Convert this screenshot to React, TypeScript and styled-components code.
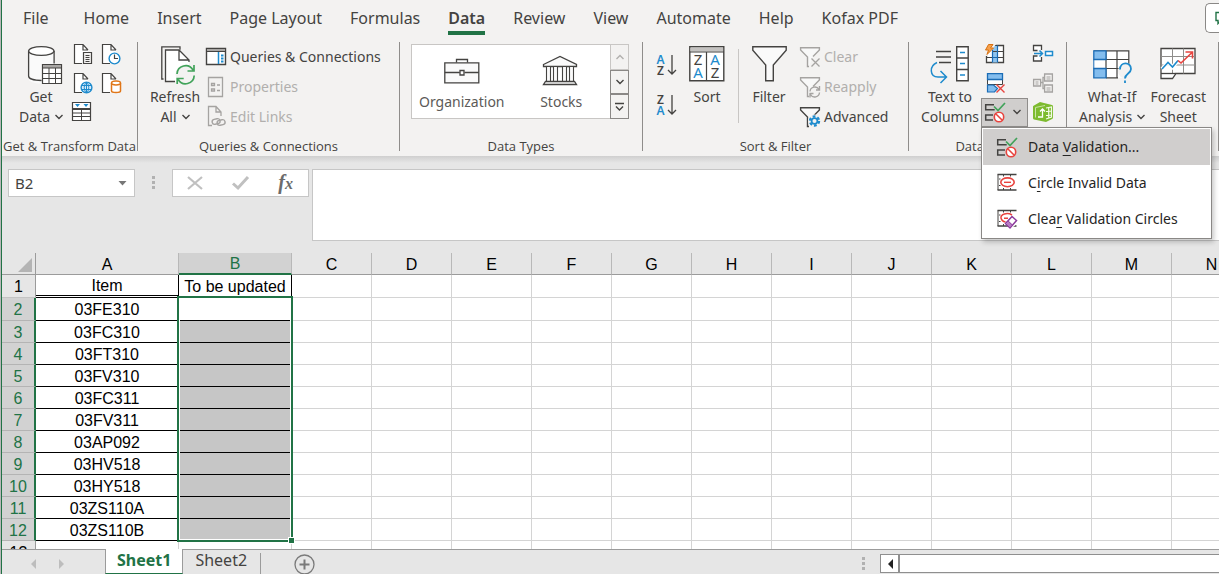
import React from 'react';
import styled, { createGlobalStyle, css } from 'styled-components';

const ink = '#444341';
const blue = '#1e8bcd';
const red = '#e8443f';
const green = '#41a35a';
const excel = '#217346';
const muted = '#a5a3a1';
const uiFont = `'Noto Sans', 'Open Sans', sans-serif`;
const cellFont = `'Liberation Sans', Arial, sans-serif`;

const GlobalStyle = createGlobalStyle`
  *, *::before, *::after { box-sizing: border-box; }
  body { margin: 0; background: #e6e6e6; }
  button, input { font: inherit; color: inherit; margin: 0; }
`;

/* ---------- window ---------- */

const Window = styled.div`
  display: flex;
  flex-direction: column;
  height: 100vh;
  overflow: hidden;
  padding-left: 1px;
  background: #b9b7b9;
  font-family: ${uiFont};
  font-size: 14px;
  color: ${ink};
`;

const Frame = styled.main`
  display: flex;
  flex-direction: column;
  flex: 1;
  min-height: 0;
  border-left: 1px solid ${excel};
  background: #e6e6e6;
`;

const PlainButton = styled.button`
  border: 0;
  padding: 0;
  background: none;
`;

/* ---------- ribbon tabs ---------- */

const TabBar = styled.nav`
  display: flex;
  align-items: flex-start;
  height: 36px;
  padding-left: 7px;
  background: #f3f2f1;
  font-size: 16px;
`;

const Tab = styled(PlainButton)<{ $active?: boolean }>`
  padding: 6px 14px 0;
  line-height: 24px;
  white-space: nowrap;
  font-weight: ${(p) => (p.$active ? 600 : 400)};

  &:first-child { padding-right: 21px; }

  &::after {
    content: '';
    display: block;
    height: 4px;
    margin-top: 1px;
    background: ${(p) => (p.$active ? excel : 'transparent')};
  }
`;

const CommentsButton = styled.button`
  display: flex;
  align-items: center;
  width: 14px;
  height: 30px;
  margin: 3px 0 0 auto;
  padding: 0 0 0 9px;
  overflow: hidden;
  border: 1px solid #8a8886;
  border-right: 0;
  border-radius: 5px 0 0 5px;
  background: #fff;
`;

/* ---------- ribbon ---------- */

const Ribbon = styled.section`
  display: flex;
  height: 120px;
  padding-top: 6px;
  background: #f3f2f1;
`;

const Group = styled.section<{ $width: number; $indent: number }>`
  display: flex;
  flex-direction: column;
  flex: none;
  width: ${(p) => p.$width}px;
  height: 112px;

  & > div { padding-left: ${(p) => p.$indent}px; }
`;

const GroupBody = styled.div`
  display: flex;
  align-items: flex-start;
  height: 96px;
`;

const Caption = styled.h2`
  margin: 0;
  font-family: 'Open Sans', 'Noto Sans', sans-serif;
  font-size: 13px;
  font-weight: 400;
  line-height: 16px;
  text-align: center;
  white-space: nowrap;
`;

const GroupRule = styled.div`
  flex: none;
  width: 1px;
  height: 109px;
  background: #8f8d8b;
`;

const InnerRule = styled.div`
  width: 1px;
  height: 74px;
  margin: 7px 2px 0 3px;
  background: #c8c6c4;
`;

const BigButton = styled(PlainButton)`
  display: flex;
  flex-direction: column;
  align-items: center;
  flex: none;
  min-width: 56px;
  padding-top: 4px;
  line-height: 20px;
  white-space: nowrap;

  & > svg { margin-bottom: 3px; }
  & + & { margin-left: 5px; }
`;

const LabelLine = styled.span`
  display: flex;
  align-items: center;
  gap: 5px;
`;

const IconGrid = styled.div<{ $columns: string; $offset?: number }>`
  display: grid;
  grid-template-columns: ${(p) => p.$columns};
  grid-auto-rows: 24px;
  row-gap: 5px;
  align-items: center;
  margin-left: ${(p) => p.$offset ?? 0}px;
`;

const IconButton = styled(PlainButton)`
  display: flex;
  align-items: center;
  justify-content: flex-start;
  padding-left: 4px;
  height: 24px;
`;

const CommandList = styled.div`
  margin-left: 3px;
`;

const Command = styled(PlainButton)`
  display: flex;
  align-items: center;
  gap: 4px;
  height: 30px;
  line-height: 20px;
  white-space: nowrap;

  &:disabled { color: #b1afad; }
`;

const SortColumn = styled.div`
  display: grid;
  grid-auto-rows: 40px;
  width: 24px;
  margin-top: 4px;
`;

const Icon = styled.svg`
  display: block;
  flex: none;
  overflow: visible;
  fill: none;
  stroke: ${ink};
  stroke-width: 1;

  text {
    stroke: none;
    fill: ${ink};
    font-family: ${uiFont};
  }
`;

/* ---------- data types gallery ---------- */

const Gallery = styled.div`
  display: flex;
  width: 218px;
  height: 75px;
  margin-top: 2px;
  border: 1px solid #c8c6c4;
  background: #fff;
`;

const GalleryItem = styled(PlainButton)`
  display: flex;
  flex-direction: column;
  align-items: center;
  flex: 1;
  min-width: 0;
  padding-top: 11px;
  line-height: 20px;
  color: #5c5a58;

  & > svg { margin-bottom: 6px; }
`;

const GalleryScroll = styled.div`
  display: grid;
  grid-template-rows: 26px 24px 25px;
  width: 19px;
  margin: -1px;
`;

const ScrollButton = styled.button`
  display: flex;
  align-items: center;
  justify-content: center;
  padding: 0;
  border: 1px solid #8a8886;
  background: #f3f2f1;

  &:disabled { border-color: #c8c6c4; }
`;

/* ---------- data validation menu ---------- */

const Split = styled.div`
  position: relative;
  height: 29px;
`;

const SplitButton = styled.button`
  display: flex;
  align-items: center;
  gap: 8px;
  width: 47px;
  height: 29px;
  padding: 0 0 0 3px;
  border: 1px solid #8f8d8b;
  background: #d0cecd;
`;

const Menu = styled.div`
  position: absolute;
  z-index: 5;
  top: 100%;
  left: 0;
  width: 231px;
  padding: 1px;
  border: 1px solid #8a8886;
  background: #fff;
  box-shadow: 2px 3px 5px rgba(0, 0, 0, 0.22);
`;

const MenuItem = styled(PlainButton)<{ $active?: boolean }>`
  display: flex;
  align-items: center;
  gap: 11px;
  width: 100%;
  height: 36px;
  padding-left: 14px;
  color: #262524;
  white-space: nowrap;
  background: ${(p) => (p.$active ? '#d0cecd' : '#fff')};

  u { text-underline-offset: 3px; }
`;

/* ---------- formula bar ---------- */

const FormulaBar = styled.section`
  display: flex;
  align-items: flex-start;
  flex: none;
  padding: 13px 0 12px 6px;
  background: linear-gradient(#cfcfcf, #e6e6e6 7px);
`;

const NameBox = styled.div`
  display: flex;
  align-items: center;
  width: 127px;
  height: 28px;
  padding-right: 7px;
  border: 1px solid #c6c6c6;
  background: #fff;
`;

const NameInput = styled.input`
  flex: 1;
  min-width: 0;
  padding: 0 0 0 6px;
  border: 0;
  outline: 0;
  background: none;
  font-size: 15px;
`;

const Grip = styled.div`
  width: 3px;
  height: 13px;
  background: repeating-linear-gradient(#b1b1b1 0 3px, transparent 3px 5px);
`;

const BarGrip = styled(Grip)`
  margin: 7px 17px 0;
`;

const EntryButtons = styled.div`
  display: flex;
  align-items: center;
  justify-content: space-between;
  width: 137px;
  height: 28px;
  padding: 0 15px 0 14px;
  border: 1px solid #c6c6c6;
  background: #fff;
`;

const FxLabel = styled.span`
  font: italic bold 20px/20px 'Liberation Serif', serif;
  color: #6b6b6b;

  small { font-size: 16px; }
`;

const FormulaInput = styled.textarea`
  flex: 1;
  height: 72px;
  margin-left: 3px;
  padding: 4px;
  border: 1px solid #c6c6c6;
  border-right: 0;
  outline: 0;
  resize: none;
  background: #fff;
`;

/* ---------- worksheet ---------- */

const SheetArea = styled.section`
  flex: 1;
  min-height: 0;
  overflow: hidden;
  background: #fff;
`;

const Sheet = styled.table`
  table-layout: fixed;
  width: 1250px;
  border-collapse: separate;
  border-spacing: 0;
  font: 16px/18px ${cellFont};
  color: #000;
`;

const Col = styled.col<{ $width: number }>`
  width: ${(p) => p.$width}px;
`;

const ColHead = styled.th<{ $selected?: boolean }>`
  height: 22px;
  padding: 2px 0 0;
  font-weight: 400;
  border-right: 1px solid #b8b8b8;
  border-bottom: 1px solid #9b9b9b;
  background: #e6e6e6;
  ${(p) =>
    p.$selected &&
    css`
      color: ${excel};
      background: #d2d2d2;
      border-bottom: 2px solid ${excel};
    `}
`;

const Corner = styled(ColHead)`
  border-right-color: #9b9b9b;

  svg { margin: 0 3px 0 auto; }
`;

const RowHead = styled.th<{ $selected?: boolean; $tall?: boolean }>`
  height: ${(p) => (p.$tall ? 23 : 22)}px;
  padding: 2px 0 0;
  font-weight: 400;
  border-right: 1px solid #9b9b9b;
  border-bottom: 1px solid #c4c4c4;
  background: #e6e6e6;
  ${(p) =>
    p.$selected &&
    css`
      color: ${excel};
      background: #d2d2d2;
      border-right: 2px solid ${excel};
      border-bottom-color: #b4b4b4;
    `}
`;

type CellKind = 'plain' | 'title' | 'titleB' | 'item' | 'active' | 'selected';

const Cell = styled.td<{ $kind: CellKind }>`
  padding: 2px 0 0;
  text-align: center;
  white-space: nowrap;
  border-right: 1px solid #d4d4d4;
  border-bottom: 1px solid #d4d4d4;
  ${(p) => p.$kind === 'title' && css`border-right-color: #000; border-bottom: 3px double #000;`}
  ${(p) => p.$kind === 'titleB' && css`border-right-color: #000;`}
  ${(p) => p.$kind === 'item' && css`border-bottom-color: #000;`}
  ${(p) => p.$kind === 'active' && css`position: relative; border-bottom-color: #000;`}
  ${(p) => p.$kind === 'selected' && css`border-bottom-color: #000; background: #c6c6c6;`}
`;

const Selection = styled.div`
  position: absolute;
  z-index: 1;
  top: -2px;
  left: -2px;
  right: -2px;
  height: 246px;
  border: 2px solid ${excel};
  box-shadow: inset 0 0 0 1px #fff;

  &::after {
    content: '';
    position: absolute;
    right: -4px;
    bottom: -4px;
    width: 7px;
    height: 7px;
    border: 1px solid #fff;
    background: ${excel};
  }
`;

/* ---------- sheet tabs ---------- */

const SheetBar = styled.footer`
  display: flex;
  flex: none;
  height: 25px;
  border-top: 1px solid #9b9b9b;
  font-size: 16px;
  line-height: 22px;
`;

const SheetArrows = styled.div`
  display: flex;
  align-items: center;
  gap: 23px;
  width: 103px;
  padding: 4px 0 0 28px;
`;

const SheetTab = styled(PlainButton)<{ $active?: boolean }>`
  padding: 0 12px 3px;
  line-height: 21px;
  ${(p) =>
    p.$active &&
    css`
      margin-top: -1px;
      padding: 0 11px 1px;
      border: solid #9b9b9b;
      border-width: 0 1px;
      border-bottom: 1px solid ${excel};
      background: #fff;
      color: ${excel};
      font-weight: 700;
    `}
`;

const TabRule = styled.div`
  width: 1px;
  margin: 3px 33px 0 1px;
  background: #9b9b9b;
`;

const AddSheet = styled(PlainButton)`
  height: 21px;
  margin-top: 4px;
`;

const ScrollTrack = styled.div`
  display: flex;
  width: 339px;
  height: 19px;
  margin: 4px 0 0 15px;
`;

const TrackButton = styled.button`
  display: flex;
  align-items: center;
  justify-content: center;
  width: 19px;
  padding: 0;
  border: 1px solid #8f8f8f;
  background: #fff;
`;

const Thumb = styled.div`
  flex: 1;
  border: 1px solid #8f8f8f;
  border-right: 0;
  background: #fff;
`;

const BottomGrip = styled(Grip)`
  margin: 7px 0 0 auto;
`;

/* ---------- icons ---------- */

const Chevron = ({ up, color = ink }: { up?: boolean; color?: string }) => (
  <Icon width="8" height="6" viewBox="0 0 8 6">
    <path d={up ? 'M.5 5L4 1.500 7.500 5' : 'M.5 1L4 4.500 7.500 1'} stroke={color} strokeWidth="1.4" />
  </Icon>
);

const Page = ({ color = ink }: { color?: string }) => (
  <>
    <path d="M.5.5H9l5 5.5v13H.5z" fill="#fff" stroke="none" />
    <path d="M8 19.5H.5V.5H9l5 5.5M9 .5V6h5" stroke={color} strokeWidth="1.2" />
  </>
);

const TextFileIcon = () => (
  <Icon width="20" height="20" viewBox="0 0 20 20">
    <Page />
    <path d="M9.5 8.5h8v11h-8z" fill="#f3f2f1" strokeWidth="1.2" />
    <path d="M11.5 11.5h4M11.5 13.5h4M11.5 15.5h4M11.5 17.5h4" />
  </Icon>
);

const RecentIcon = () => (
  <Icon width="20" height="20" viewBox="0 0 20 20">
    <Page />
    <circle cx="12.5" cy="14.5" r="5.4" fill="#fff" stroke={blue} strokeWidth="1.4" />
    <path d="M12.5 10.5v4h3.5" strokeWidth="1.2" />
  </Icon>
);

const WebIcon = () => (
  <Icon width="20" height="20" viewBox="0 0 20 20">
    <Page />
    <circle cx="12.5" cy="14.5" r="5.4" fill="#d6eafa" stroke={blue} strokeWidth="1.4" />
    <path d="M7 12.5h11M7 16.5h11M12.5 9v11M12.5 9c-3 3-3 8 0 11M12.5 9c3 3 3 8 0 11" stroke={blue} />
  </Icon>
);

const DatabasePageIcon = () => (
  <Icon width="20" height="20" viewBox="0 0 20 20">
    <Page />
    <path d="M9.5 10v8c0 2 9 2 9 0v-8" fill="#fff" stroke="#e07618" strokeWidth="1.5" />
    <ellipse cx="14" cy="10" rx="4.5" ry="1.9" fill="#fff" stroke="#e07618" strokeWidth="1.5" />
  </Icon>
);

const TableRangeIcon = () => (
  <Icon width="20" height="20" viewBox="0 0 20 20">
    <path d="M-1.500.500h18v18h-18z" fill="#fff" strokeWidth="1.2" />
    <path d="M-1.500 11h18M-1.500 14.500h18M7.500 7v11.500" />
    <path d="M-1.500 7h18" strokeWidth="2" />
    <path d="M1 2h5L3.500 5zM9.500 2h5L12 5z" fill={blue} stroke="none" />
  </Icon>
);

const GetDataIcon = () => (
  <Icon width="42" height="38" viewBox="-8 0 42 38">
    <path d="M.6 5v28c0 2.600 5.500 4.500 13 4.500h12.500V5" fill="#fafafa" stroke="none" />
    <path d="M.6 5v25c0 2.500 5 4.500 13 4.500M26.100 5v12.500" strokeWidth="1.300" />
    <ellipse cx="13.300" cy="5" rx="12.700" ry="4.400" fill="#fff" strokeWidth="1.300" />
    <path d="M14.500 18.500h19v19h-19z" fill="#fff" strokeWidth="1.200" />
    <path d="M14.500 18.500h19v3.500h-19z" fill="#a9a7a5" />
    <path d="M14.500 27.500h19M14.500 32.500h19M21 22v15.500M27.500 22v15.500" />
  </Icon>
);

const RefreshIcon = () => (
  <Icon width="41" height="38" viewBox="-6 0 41 38">
    <path d="M2.500 33H.8V.8H19v3" strokeWidth="1.300" />
    <path d="M4.500 4H18l10 10v21.500H4.500z" fill="#fff" stroke="none" />
    <path d="M14 35.500H4.500V4H18l10 10v2M18 4v10h10" strokeWidth="1.300" />
    <circle cx="24.500" cy="28.500" r="10" fill="#f3f2f1" stroke="none" />
    <path d="M16 28a8.600 8.600 0 0 1 16-4M33 19v6h-6.500M33.200 29.500a8.600 8.600 0 0 1-16 4M16.200 38v-5.500h6.500" stroke={green} strokeWidth="1.700" />
  </Icon>
);

const QueriesIcon = () => (
  <Icon width="20" height="20" viewBox="0 0 20 20">
    <path d="M.5 1.500h19v16H.5z" fill="#fff" strokeWidth="1.400" />
    <path d="M1 2h18v2.500H1z" fill="#a9a7a5" stroke="none" />
    <path d="M.5 4.500h19" />
    <path d="M12.500 5v12" stroke={blue} strokeWidth="1.500" />
    <path d="M15 8.500h2.500M15 11.500h2.500M15 14.500h2.500" stroke={blue} strokeWidth="2" />
  </Icon>
);

const PropertiesIcon = () => (
  <Icon width="20" height="20" viewBox="0 0 20 20">
    <path d="M2.500.500h14v19h-14z" stroke={muted} strokeWidth="1.300" />
    <path d="M5.500 6.500h3v2h-3zM5.500 12h3v2h-3zM11 8h3M11 13.500h3" stroke={muted} strokeWidth="1.300" />
  </Icon>
);

const EditLinksIcon = () => (
  <Icon width="20" height="20" viewBox="0 0 20 20">
    <path d="M6 18.500H2.500V-.500H10l5 5.500v4M10-.500V5h5" stroke={muted} strokeWidth="1.300" />
    <rect x="6" y="12" width="8" height="5" rx="2.500" stroke={muted} strokeWidth="1.400" transform="rotate(-12 10 14)" />
    <rect x="11" y="13" width="8" height="5" rx="2.500" stroke={muted} strokeWidth="1.400" transform="rotate(-12 15 15)" />
  </Icon>
);

const BriefcaseIcon = () => (
  <Icon width="36" height="30" viewBox="0 0 36 30">
    <path d="M.8 6.800h34v20h-34z" fill="#fafafa" strokeWidth="1.300" />
    <path d="M12.500 6.500v-3h11v3M.8 16.500h15M20.500 16.500h14.300" strokeWidth="1.300" />
    <path d="M16 14.500h4v4.500h-4z" fill="#fff" strokeWidth="1.300" />
  </Icon>
);

const BankIcon = () => (
  <Icon width="38" height="30" viewBox="0 0 38 30">
    <path d="M1.500 8.500L18 .500l16.500 8v2h-33z" fill="#fafafa" strokeWidth="1.300" />
    <path d="M4.500 10.500h4v15h-4zM11.500 10.500h4v15h-4zM20.500 10.500h4v15h-4zM27.500 10.500h4v15h-4z" fill="#fafafa" strokeWidth="1.100" />
    <path d="M3.500 25.500h29l2 3h-33z" fill="#fafafa" strokeWidth="1.300" />
  </Icon>
);

const SortLettersIcon = ({ top, bottom }: { top: 'A' | 'Z'; bottom: 'A' | 'Z' }) => (
  <Icon width="22" height="22" viewBox="0 0 22 22">
    <text x="5.500" y="9" fontSize="12" fontWeight="600" textAnchor="middle" style={{ fill: top === 'A' ? blue : ink }}>{top}</text>
    <text x="5.500" y="20" fontSize="12" fontWeight="600" textAnchor="middle" style={{ fill: bottom === 'A' ? blue : ink }}>{bottom}</text>
    <path d="M17 0v19M13 15l4 4 4-4" strokeWidth="1.300" />
  </Icon>
);

const SortIcon = () => (
  <Icon width="36" height="38" viewBox="0 0 36 38">
    <path d="M.8.800h34v34H.8z" fill="#fff" strokeWidth="1.400" />
    <path d="M1.500 1.500h32.600v4H1.500z" fill="#c4c2c0" stroke="none" />
    <path d="M.8 6h34M17.500 6v29" strokeWidth="1.200" />
    <text x="9" y="19" fontSize="15" textAnchor="middle">Z</text>
    <text x="9" y="32" fontSize="15" textAnchor="middle" style={{ fill: blue }}>A</text>
    <text x="26" y="19" fontSize="15" textAnchor="middle" style={{ fill: blue }}>A</text>
    <text x="26" y="32" fontSize="15" textAnchor="middle">Z</text>
  </Icon>
);

const FilterIcon = () => (
  <Icon width="35" height="38" viewBox="0 0 35 38">
    <path d="M.8.800h33.400v3.500L21.300 19v15.800h-7.600V19L.8 4.300z" fill="#fafafa" strokeWidth="1.400" />
  </Icon>
);

const SmallFunnel = ({ color }: { color: string }) => (
  <path d="M9 19.500H7.500V10L.6 3V.700h18.800V3L13 9.500" fill="#f8f8f8" stroke={color} strokeWidth="1.400" />
);

const ClearFilterIcon = () => (
  <Icon width="20" height="20" viewBox="0 0 20 20">
    <SmallFunnel color={muted} />
    <path d="M11.500 11.500l8 8M19.500 11.500l-8 8" stroke={muted} strokeWidth="1.300" />
  </Icon>
);

const ReapplyIcon = () => (
  <Icon width="20" height="20" viewBox="0 0 20 20">
    <SmallFunnel color={muted} />
    <path d="M10 14.500a4.800 4.800 0 0 1 9-2M19.500 9v4H16M19.500 15.500a4.800 4.800 0 0 1-9 2M10 20.500v-4h3.500" stroke={muted} strokeWidth="1.400" />
  </Icon>
);

const AdvancedIcon = () => (
  <Icon width="20" height="20" viewBox="0 0 20 20">
    <SmallFunnel color={ink} />
    <circle cx="14.500" cy="14" r="6.500" fill="#f3f2f1" stroke="none" />
    <circle cx="14.500" cy="14" r="4.600" stroke={blue} strokeWidth="2.200" strokeDasharray="2.800 2.017" />
    <circle cx="14.500" cy="14" r="2.900" stroke={blue} strokeWidth="1.700" />
  </Icon>
);

const TextToColumnsIcon = () => (
  <Icon width="40" height="38" viewBox="0 0 40 38">
    <path d="M6 5.500h15M6 11h15M9 16.500h12" strokeWidth="1.400" />
    <path d="M26.700.800h11.500v34H26.700z" fill="#fff" strokeWidth="1.400" />
    <path d="M26.700 12h11.500M26.700 23.500h11.500" strokeWidth="1.300" />
    <path d="M30 6.500h5M30 17.500h5M30 29h5" stroke={blue} strokeWidth="1.400" />
    <path d="M7 16.500C-1 20-.500 31 8 31h8M10.500 25l6 6-6 6" stroke={blue} strokeWidth="1.500" />
  </Icon>
);

const FlashFillIcon = () => (
  <Icon width="20" height="20" viewBox="0 0 20 20">
    <path d="M1.500 1.500h17v17h-17z" fill="#fff" strokeWidth="1.300" />
    <path d="M7 2h6v16.500H7z" fill="#8fc4ee" stroke="none" />
    <path d="M1.500 13.500h17M7 7.500h11.500" />
    <path d="M7.500 6v12.500M12.500 1.500v17M7 13.500h6" stroke="#1b6cb5" strokeWidth="1.200" />
    <path d="M0-1h12L2 12H-1z" fill="#f3f2f1" stroke="none" />
    <path d="M3.500.500h4.500L5.500 4h3L2 10.500l1.500-4.500h-3z" fill="#f5a04c" stroke="#d9710f" />
  </Icon>
);

const RemoveDuplicatesIcon = () => (
  <Icon width="20" height="20" viewBox="0 0 20 20">
    <path d="M2.500 6.500h15v5h-15z" fill="#fff" />
    <path d="M2.500.700h15v5.800h-15z" fill="#83bdee" stroke="#1b6cb5" strokeWidth="1.300" />
    <path d="M2.500 12h6l4 3.500-3 3.500h-7z" fill="#83bdee" stroke="#1b6cb5" strokeWidth="1.200" />
    <path d="M11.500 11.500l8 8M19.500 11.500l-8 8" stroke={red} strokeWidth="1.400" />
  </Icon>
);

const ConsolidateIcon = () => (
  <Icon width="20" height="20" viewBox="0 0 20 20">
    <path d="M8.500 6V1.500h-8v5h4M8.500 13v4h-8v-5h4" fill="#fff" strokeWidth="1.300" />
    <path d="M12.500 7.500h7v4h-7z" fill="#fff" stroke={blue} strokeWidth="1.500" />
    <path d="M1 9.500h8M6.500 6.500l3 3-3 3" stroke={blue} strokeWidth="1.500" />
  </Icon>
);

const RelationshipsIcon = () => (
  <Icon width="20" height="20" viewBox="0 0 20 20">
    <path d="M.6 6.500h7v6.500h-7zM11.600 1h7.800v7h-7.800zM11.600 12h7.800v7h-7.800zM7.600 9.500H10M11.500 4.500H10v11h1.500" stroke={muted} strokeWidth="1.300" />
    <path d="M2.500 9h3M2.500 11h3M13.500 4h4M13.500 6h4M13.500 15h4M13.500 17h4" stroke={muted} />
  </Icon>
);

const DataModelIcon = () => (
  <Icon width="20" height="20" viewBox="0 0 20 20">
    <path d="M0 4.500Q0 4 1 3.500L7 0l12 3q1 .300 1 1.500v11q0 1-1 1.500l-6 3-12-2.500q-1-.300-1-1.500z" fill="#7dbb2f" stroke="none" />
    <path d="M2.500 15.500V5.500L12 3.500" stroke="#c9e4a4" />
    <path d="M13 6l5.500-1v10L13 17M13 9.500l5.500-.500M13 13.500l5.500-.500M15.700 5.500v11" stroke="#f2fae6" strokeWidth="1.200" />
    <path d="M9.500 7v8H5M7 9.500L9.500 7 12 9.500" stroke="#fff" strokeWidth="1.300" />
  </Icon>
);

const ValidationIcon = () => (
  <Icon width="20" height="20" viewBox="0 0 20 20">
    <path d="M9 2.700H.700v5h9M8 13H.700v5H8" strokeWidth="1.500" />
    <path d="M9 4.500L13 8.500 20 1" stroke={green} strokeWidth="1.700" />
    <circle cx="14" cy="15" r="4.700" fill="#fff" stroke={red} strokeWidth="1.600" />
    <path d="M10.700 11.700l6.600 6.600" stroke={red} strokeWidth="1.600" />
  </Icon>
);

const CellFrame = () => (
  <>
    <path d="M.5 1.500h19M.5 17h19" strokeWidth="1.400" />
    <path d="M1 1.500V17M2 6h1.500M2 12.500h1.500M6.500 1.500v2M13.500 1.500v2M6.500 15v2M13.500 15v2" />
  </>
);

const CircleInvalidIcon = () => (
  <Icon width="20" height="20" viewBox="0 0 20 20">
    <CellFrame />
    <ellipse cx="10.500" cy="9.300" rx="6.700" ry="4.400" stroke={red} strokeWidth="1.600" />
    <path d="M7 9.300h7" stroke={red} strokeWidth="1.400" />
  </Icon>
);

const ClearCirclesIcon = () => (
  <Icon width="20" height="20" viewBox="0 0 20 20">
    <CellFrame />
    <circle cx="14" cy="13.500" r="5" fill="#fff" stroke="none" />
    <path d="M15 6C10 3 3.500 5.500 4 9c.500 2.500 2.500 3.500 4.500 4M7 9.300h4" stroke={red} strokeWidth="1.500" />
    <path d="M8.500 14.500l6.500-7 4.500 4-6.500 7.500z" fill="#fff" stroke="#8c3a9c" strokeWidth="1.500" />
    <path d="M8.500 14.500l2.500-2.700 4.500 4.300-2.500 2.900z" fill="#b77bc4" stroke="#8c3a9c" />
  </Icon>
);

const WhatIfIcon = () => (
  <Icon width="38" height="38" viewBox="0 0 38 38">
    <path d="M.8 4.800h35v27H.8z" fill="#fff" stroke="none" />
    <path d="M.8 4.800h35v13M.8 13.500h35M.8 22.500h26M13 31.800h12M24 4.800v27M13 4.800v27" strokeWidth="1.200" />
    <path d="M.8 4.800H13v8.700H.8zM.8 22.500H13v9.300H.8z" fill="#83bdee" stroke="#1b6cb5" strokeWidth="1.300" />
    <path d="M.8 13.500v9" stroke="#1b6cb5" />
    <circle cx="32.500" cy="25" r="7.500" fill="#f3f2f1" stroke="none" />
    <path d="M27 23.500c0-8 11-8 11-.500 0 4.500-6 4.500-6 9.500M32 34.500V37" stroke={blue} strokeWidth="1.800" />
  </Icon>
);

const ForecastIcon = () => (
  <Icon width="36" height="38" viewBox="0 0 36 38">
    <path d="M1 2.500h34v25H16l-3.500 5H1z" fill="#fff" strokeWidth="1.300" />
    <path d="M1 10.500h34M1 19h34M12.500 2.500v25M23.500 2.500v25" stroke="#8f8d8b" />
    <path d="M1 27.500h15" strokeWidth="1.300" />
    <path d="M2 23l6-6.500 4.500 4.500 5-6" stroke="#fff" strokeWidth="4" />
    <path d="M2 23l6-6.500 4.500 4.500 5.500-6.500" stroke={blue} strokeWidth="1.600" />
    <path d="M18 14.500l3 2.500L32 6.500M25.500 6H32.500v6.500" stroke={red} strokeWidth="1.600" />
  </Icon>
);

const CommentIcon = () => (
  <Icon width="14" height="14" viewBox="0 0 14 14">
    <path d="M1 1.500h12v8H6l-3 3v-3H1z" stroke={excel} strokeWidth="1.400" />
  </Icon>
);

const Arrow = ({ d, color }: { d: string; color: string }) => (
  <Icon width="6" height="10" viewBox="0 0 6 10">
    <path d={d} fill={color} stroke="none" />
  </Icon>
);

/* ---------- data ---------- */

const tabs = ['File', 'Home', 'Insert', 'Page Layout', 'Formulas', 'Data', 'Review', 'View', 'Automate', 'Help', 'Kofax PDF'];
const extraColumns = ['C', 'D', 'E', 'F', 'G', 'H', 'I', 'J', 'K', 'L', 'M', 'N'];
const items = ['03FE310', '03FC310', '03FT310', '03FV310', '03FC311', '03FV311', '03AP092', '03HV518', '03HY518', '03ZS110A', '03ZS110B'];

const BlankCells = () => (
  <>
    {extraColumns.map((c) => (
      <Cell key={c} $kind="plain" />
    ))}
  </>
);

const Worksheet = () => (
  <SheetArea>
    <Sheet>
      <colgroup>
        <Col $width={34} />
        <Col $width={143} />
        <Col $width={113} />
        {extraColumns.map((c) => (
          <Col key={c} $width={80} />
        ))}
      </colgroup>
      <thead>
        <tr>
          <Corner aria-label="Select all">
            <Icon width="14" height="14" viewBox="0 0 14 14">
              <path d="M14 0v14H0z" fill="#b4b4b4" stroke="none" />
            </Icon>
          </Corner>
          <ColHead scope="col">A</ColHead>
          <ColHead scope="col" $selected>B</ColHead>
          {extraColumns.map((c) => (
            <ColHead key={c} scope="col">{c}</ColHead>
          ))}
        </tr>
      </thead>
      <tbody>
        <tr>
          <RowHead scope="row" $tall>1</RowHead>
          <Cell $kind="title">Item</Cell>
          <Cell $kind="titleB">To be updated</Cell>
          <BlankCells />
        </tr>
        {items.map((item, i) => (
          <tr key={item}>
            <RowHead scope="row" $selected $tall={i === 0}>{i + 2}</RowHead>
            <Cell $kind="item">{item}</Cell>
            <Cell $kind={i === 0 ? 'active' : 'selected'}>{i === 0 && <Selection />}</Cell>
            <BlankCells />
          </tr>
        ))}
        <tr>
          <RowHead scope="row">13</RowHead>
          <Cell $kind="plain" />
          <Cell $kind="plain" />
          <BlankCells />
        </tr>
      </tbody>
    </Sheet>
  </SheetArea>
);

export default function App() {
  return (
    <Window>
      <GlobalStyle />
      <Frame>
        <TabBar>
          {tabs.map((t) => (
            <Tab key={t} $active={t === 'Data'}>{t}</Tab>
          ))}
          <CommentsButton aria-label="Comments"><CommentIcon /></CommentsButton>
        </TabBar>

        <Ribbon>
          <Group $width={135} $indent={11}>
            <GroupBody>
              <BigButton>
                <GetDataIcon />
                <span>Get</span>
                <LabelLine>Data <Chevron /></LabelLine>
              </BigButton>
              <IconGrid $columns="28px 28px" $offset={1}>
                <IconButton aria-label="From text"><TextFileIcon /></IconButton>
                <IconButton aria-label="Recent sources"><RecentIcon /></IconButton>
                <IconButton aria-label="From web"><WebIcon /></IconButton>
                <IconButton aria-label="Existing connections"><DatabasePageIcon /></IconButton>
                <IconButton aria-label="From table or range"><TableRangeIcon /></IconButton>
              </IconGrid>
            </GroupBody>
            <Caption>Get &amp; Transform Data</Caption>
          </Group>
          <GroupRule />

          <Group $width={261} $indent={9}>
            <GroupBody>
              <BigButton>
                <RefreshIcon />
                <span>Refresh</span>
                <LabelLine>All <Chevron /></LabelLine>
              </BigButton>
              <CommandList>
                <Command><QueriesIcon />Queries &amp; Connections</Command>
                <Command disabled><PropertiesIcon />Properties</Command>
                <Command disabled><EditLinksIcon />Edit Links</Command>
              </CommandList>
            </GroupBody>
            <Caption>Queries &amp; Connections</Caption>
          </Group>
          <GroupRule />

          <Group $width={242} $indent={11}>
            <GroupBody>
              <Gallery>
                <GalleryItem><BriefcaseIcon />Organization</GalleryItem>
                <GalleryItem><BankIcon />Stocks</GalleryItem>
                <GalleryScroll>
                  <ScrollButton disabled aria-label="Scroll up"><Chevron up color="#b1afad" /></ScrollButton>
                  <ScrollButton aria-label="Scroll down"><Chevron /></ScrollButton>
                  <ScrollButton aria-label="More data types">
                    <Icon width="9" height="9" viewBox="0 0 9 9">
                      <path d="M0 1.500h9M1 4.500L4.500 8 8 4.500" strokeWidth="1.400" />
                    </Icon>
                  </ScrollButton>
                </GalleryScroll>
              </Gallery>
            </GroupBody>
            <Caption>Data Types</Caption>
          </Group>
          <GroupRule />

          <Group $width={265} $indent={12}>
            <GroupBody>
              <SortColumn>
                <PlainButton aria-label="Sort A to Z"><SortLettersIcon top="A" bottom="Z" /></PlainButton>
                <PlainButton aria-label="Sort Z to A"><SortLettersIcon top="Z" bottom="A" /></PlainButton>
              </SortColumn>
              <BigButton><SortIcon />Sort</BigButton>
              <InnerRule />
              <BigButton><FilterIcon />Filter</BigButton>
              <CommandList>
                <Command disabled><ClearFilterIcon />Clear</Command>
                <Command disabled><ReapplyIcon />Reapply</Command>
                <Command><AdvancedIcon />Advanced</Command>
              </CommandList>
            </GroupBody>
            <Caption>Sort &amp; Filter</Caption>
          </Group>
          <GroupRule />

          <Group $width={157} $indent={12}>
            <GroupBody>
              <BigButton>
                <TextToColumnsIcon />
                <span>Text to</span>
                <span>Columns</span>
              </BigButton>
              <IconGrid $columns="48px 24px" $offset={2}>
                <IconButton aria-label="Flash fill"><FlashFillIcon /></IconButton>
                <IconButton aria-label="Consolidate"><ConsolidateIcon /></IconButton>
                <IconButton aria-label="Remove duplicates"><RemoveDuplicatesIcon /></IconButton>
                <IconButton aria-label="Relationships"><RelationshipsIcon /></IconButton>
                <Split>
                  <SplitButton aria-label="Data validation" aria-expanded="true">
                    <ValidationIcon />
                    <Chevron />
                  </SplitButton>
                  <Menu role="menu">
                    <MenuItem role="menuitem" $active>
                      <ValidationIcon /><span>Data <u>V</u>alidation...</span>
                    </MenuItem>
                    <MenuItem role="menuitem">
                      <CircleInvalidIcon /><span>C<u>i</u>rcle Invalid Data</span>
                    </MenuItem>
                    <MenuItem role="menuitem">
                      <ClearCirclesIcon /><span>Clea<u>r</u> Validation Circles</span>
                    </MenuItem>
                  </Menu>
                </Split>
                <IconButton aria-label="Manage data model"><DataModelIcon /></IconButton>
              </IconGrid>
            </GroupBody>
            <Caption>Data Tools</Caption>
          </Group>
          <GroupRule />

          <Group $width={151} $indent={12}>
            <GroupBody>
              <BigButton>
                <WhatIfIcon />
                <span>What-If</span>
                <LabelLine>Analysis <Chevron /></LabelLine>
              </BigButton>
              <BigButton>
                <ForecastIcon />
                <span>Forecast</span>
                <span>Sheet</span>
              </BigButton>
            </GroupBody>
          </Group>
          <GroupRule />
        </Ribbon>

        <FormulaBar>
          <NameBox>
            <NameInput aria-label="Name box" defaultValue="B2" />
            <PlainButton aria-label="Open name list">
              <Icon width="9" height="5" viewBox="0 0 9 5">
                <path d="M.500 0h8l-4 4.500z" fill="#777" stroke="none" />
              </Icon>
            </PlainButton>
          </NameBox>
          <BarGrip />
          <EntryButtons>
            <PlainButton aria-label="Cancel">
              <Icon width="16" height="14" viewBox="0 0 16 14">
                <path d="M1 1l14 12M15 1L1 13" stroke="#c0c0c0" strokeWidth="2.200" />
              </Icon>
            </PlainButton>
            <PlainButton aria-label="Enter">
              <Icon width="17" height="14" viewBox="0 0 17 14">
                <path d="M1 7.500l5 4.500L16 1" stroke="#c0c0c0" strokeWidth="3" />
              </Icon>
            </PlainButton>
            <PlainButton aria-label="Insert function"><FxLabel>f<small>x</small></FxLabel></PlainButton>
          </EntryButtons>
          <FormulaInput aria-label="Formula" />
        </FormulaBar>

        <Worksheet />

        <SheetBar>
          <SheetArrows>
            <PlainButton aria-label="Previous sheet"><Arrow d="M6 0v10L1 5z" color="#bdbdbd" /></PlainButton>
            <PlainButton aria-label="Next sheet"><Arrow d="M0 0v10l5-5z" color="#bdbdbd" /></PlainButton>
          </SheetArrows>
          <SheetTab $active>Sheet1</SheetTab>
          <SheetTab>Sheet2</SheetTab>
          <TabRule />
          <AddSheet aria-label="New sheet">
            <Icon width="21" height="21" viewBox="0 0 21 21">
              <circle cx="10.500" cy="10.500" r="9.500" stroke="#7a7a7a" strokeWidth="1.300" />
              <path d="M5.500 10.500h10M10.500 5.500v10" stroke="#7a7a7a" strokeWidth="2" />
            </Icon>
          </AddSheet>
          <BottomGrip />
          <ScrollTrack>
            <TrackButton aria-label="Scroll left"><Arrow d="M6 0v10L1 5z" color="#222" /></TrackButton>
            <Thumb />
          </ScrollTrack>
        </SheetBar>
      </Frame>
    </Window>
  );
}
